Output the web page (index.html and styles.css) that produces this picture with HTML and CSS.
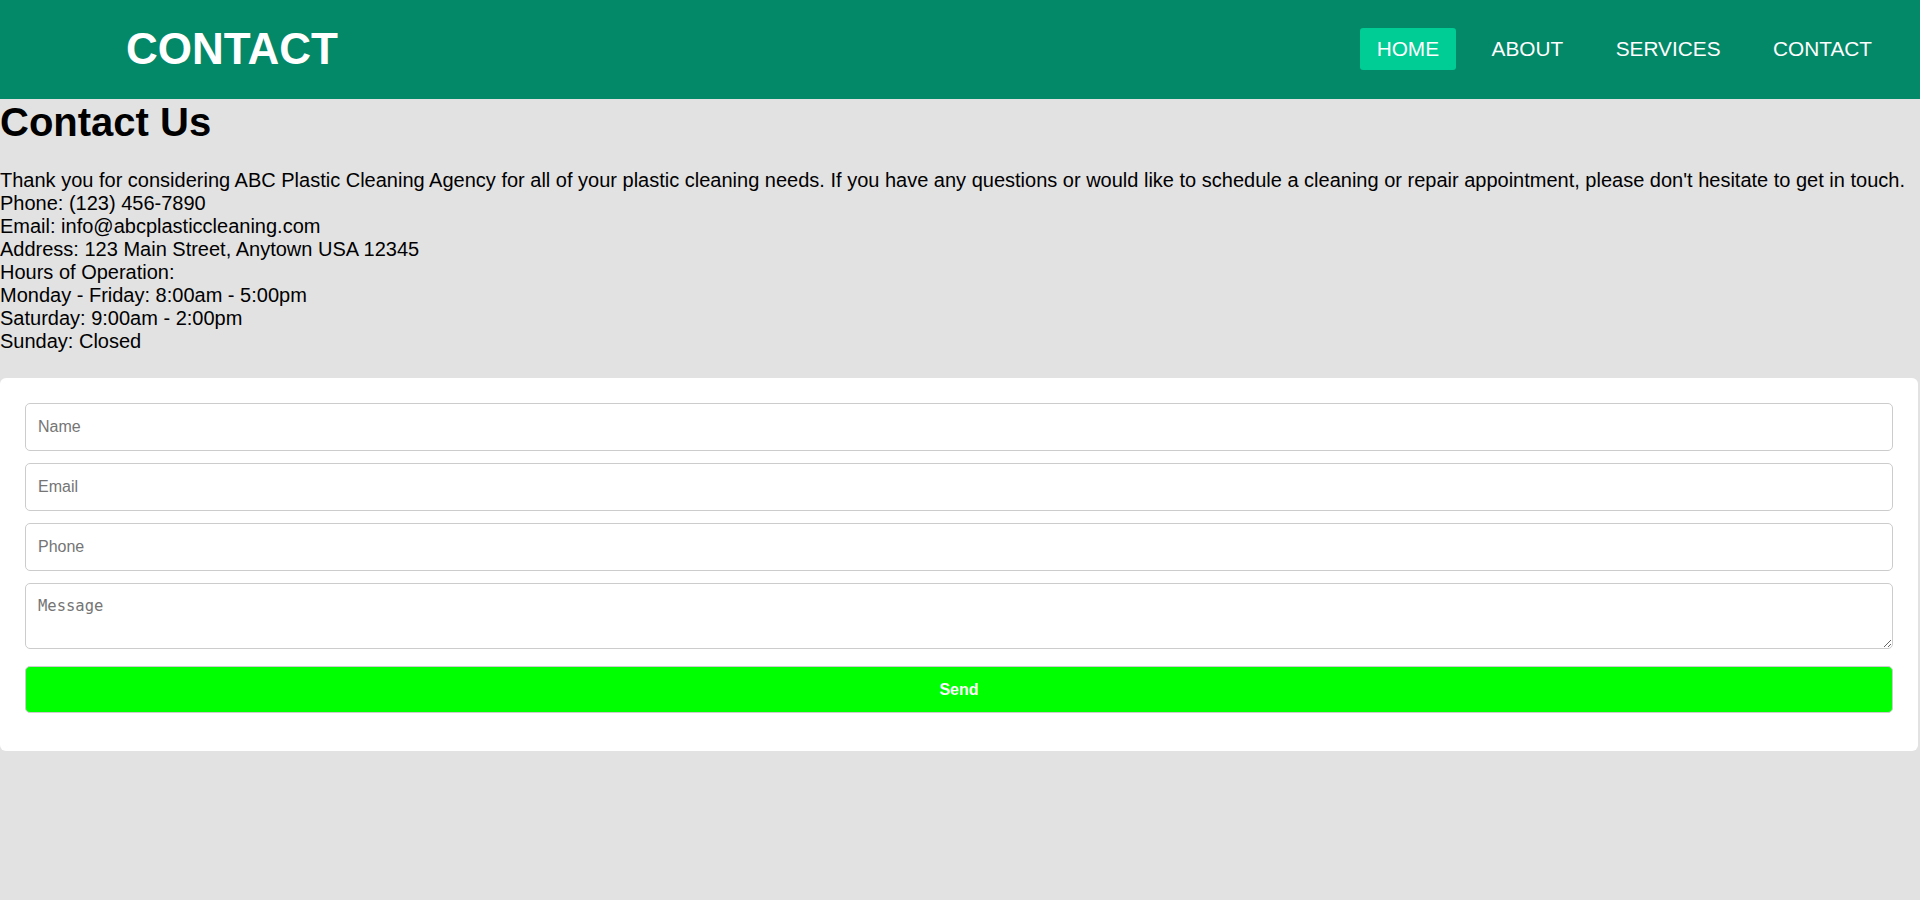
FILE: index.html
```html
<!DOCTYPE html>
<html lang="en">
<head>
<meta charset="utf-8">
<title>Contact</title>
<link rel="stylesheet" href="styles.css">
</head>
<body>
<header class="site-header">
  <div class="brand">CONTACT</div>
  <nav class="nav">
    <a class="nav-link active" href="#">HOME</a>
    <a class="nav-link" href="#">ABOUT</a>
    <a class="nav-link" href="#">SERVICES</a>
    <a class="nav-link" href="#">CONTACT</a>
  </nav>
</header>
<main>
  <h1 class="page-title">Contact Us</h1>
  <p class="info">Thank you for considering ABC Plastic Cleaning Agency for all of your plastic cleaning needs. If you have any questions or would like to schedule a cleaning or repair appointment, please don't hesitate to get in touch.<br>
  Phone: (123) 456-7890<br>
  Email: info@abcplasticcleaning.com<br>
  Address: 123 Main Street, Anytown USA 12345<br>
  Hours of Operation:<br>
  Monday - Friday: 8:00am - 5:00pm<br>
  Saturday: 9:00am - 2:00pm<br>
  Sunday: Closed</p>
  <form class="card">
    <input class="field" type="text" placeholder="Name">
    <input class="field" type="email" placeholder="Email">
    <input class="field" type="tel" placeholder="Phone">
    <textarea class="field message" placeholder="Message"></textarea>
    <button class="send" type="button">Send</button>
  </form>
</main>
</body>
</html>
```
FILE: styles.css
```css
html, body {
  margin: 0;
  padding: 0;
}
body {
  background: #e2e2e2;
  font-family: "Liberation Sans", Arial, sans-serif;
  font-size: 20px;
  color: #000;
}
.site-header {
  box-sizing: border-box;
  background: #038868;
  height: 99px;
  display: flex;
  align-items: center;
  justify-content: space-between;
  padding: 0 31px 2px 126px;
}
.brand {
  color: #fff;
  font-weight: bold;
  font-size: 44px;
  line-height: 1;
}
.nav {
  display: flex;
  gap: 18.5px;
}
.nav-link {
  color: #fff;
  text-decoration: none;
  font-size: 20.8px;
  line-height: 24px;
  padding: 9px 17px;
  border-radius: 3px;
}
.nav-link.active {
  background: #00cc95;
}
.page-title {
  margin: 0;
  font-size: 40px;
  font-weight: bold;
  line-height: 46px;
}
.info {
  margin: 24px 0 25px;
  line-height: 23px;
}
.card {
  background: #fff;
  border-radius: 6px;
  padding: 25px 25px 38px;
  display: flex;
  flex-direction: column;
  margin-right: 2px;
}
.field {
  box-sizing: border-box;
  height: 48px;
  margin: 0 0 12px;
  padding: 12px;
  border: 1px solid #ccc;
  border-radius: 5px;
  font-family: "Liberation Sans", Arial, sans-serif;
  font-size: 16px;
  background: #fff;
}
.message {
  height: 66px;
  font-family: "DejaVu Sans Mono", monospace;
  font-size: 15.5px;
  padding-top: 13px;
  margin-bottom: 17px;
  resize: vertical;
}
.send {
  height: 47px;
  background: #00ff00;
  border: 1px solid #ccc;
  border-radius: 5px;
  color: #fff;
  font-family: "Liberation Sans", Arial, sans-serif;
  font-weight: bold;
  font-size: 16px;
}
```
